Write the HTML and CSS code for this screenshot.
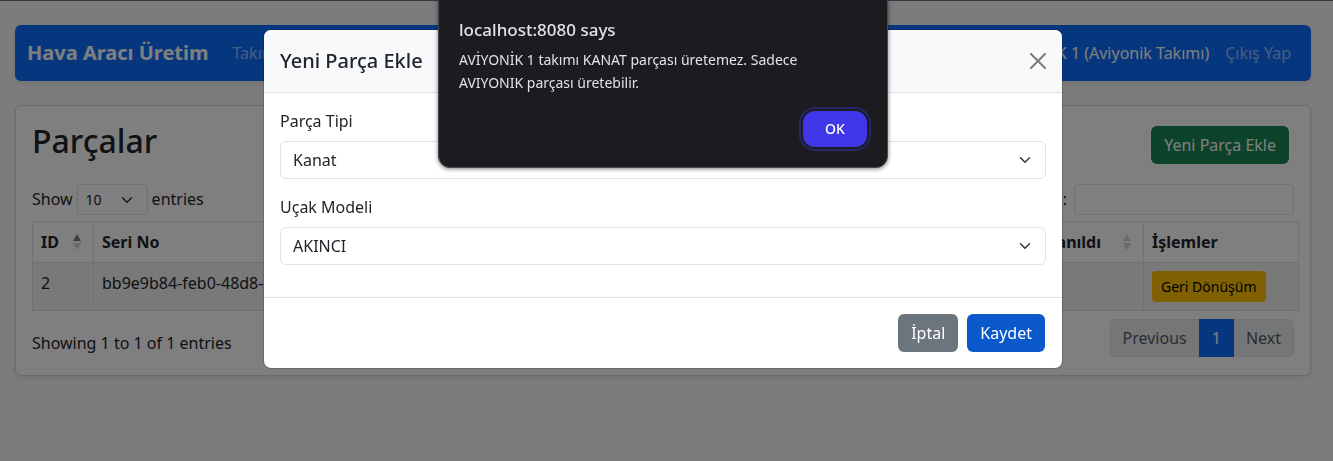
FILE: index.html
```
<!DOCTYPE html>
<html lang="tr">
<head>
<meta charset="utf-8">
<title>Hava Aracı Üretim</title>
<link rel="stylesheet" href="styles.css">
</head>
<body>
<div class="page">
  <nav class="navbar">
    <a class="brand" href="#">Hava Aracı Üretim</a>
    <a class="nav-link" href="#">Takım</a>
    <span class="nav-user">AVİYONİK 1 (Aviyonik Takımı)</span>
    <a class="nav-link" href="#">Çıkış Yap</a>
  </nav>
  <main class="card">
    <div class="card-head">
      <h2 class="card-title">Parçalar</h2>
      <button class="btn btn-success" type="button">Yeni Parça Ekle</button>
    </div>
    <div class="controls">
      <label class="control">Show
        <select class="select select-sm"><option>10</option></select>
        entries</label>
      <label class="control">Search:
        <input class="search" type="search"></label>
    </div>
    <table class="table">
      <thead>
        <tr>
          <th class="col-id"><span class="sort">ID
            <svg class="sort-icon" viewBox="0 0 8 16" aria-hidden="true"><path class="sort-on" d="M4 0 8 7H0z"/><path d="M4 16 0 9h8z"/></svg></span></th>
          <th>Seri No</th>
          <th class="col-used"><span class="sort">Kullanıldı
            <svg class="sort-icon" viewBox="0 0 8 16" aria-hidden="true"><path d="M4 0 8 7H0z"/><path d="M4 16 0 9h8z"/></svg></span></th>
          <th class="col-actions">İşlemler</th>
        </tr>
      </thead>
      <tbody>
        <tr>
          <td>2</td>
          <td>bb9e9b84-feb0-48d8-</td>
          <td></td>
          <td><button class="btn btn-warning" type="button">Geri Dönüşüm</button></td>
        </tr>
      </tbody>
    </table>
    <div class="table-foot">
      <div>Showing 1 to 1 of 1 entries</div>
      <div class="pagination">
        <button class="page-btn" type="button">Previous</button>
        <button class="page-btn page-active" type="button">1</button>
        <button class="page-btn" type="button">Next</button>
      </div>
    </div>
  </main>
</div>

<div class="backdrop">
  <div class="modal" role="dialog" aria-labelledby="modal-title">
    <div class="modal-header">
      <h5 class="modal-title" id="modal-title">Yeni Parça Ekle</h5>
      <button class="close" type="button" aria-label="Kapat">
        <svg class="close-icon" viewBox="0 0 16 16" aria-hidden="true"><path d="M1 1 15 15M15 1 1 15"/></svg>
      </button>
    </div>
    <form class="modal-body">
      <div class="field">
        <label for="part-type">Parça Tipi</label>
        <select class="select" id="part-type"><option>Kanat</option></select>
      </div>
      <div class="field">
        <label for="aircraft">Uçak Modeli</label>
        <select class="select" id="aircraft"><option>AKINCI</option></select>
      </div>
    </form>
    <div class="modal-footer">
      <button class="btn btn-secondary" type="button">İptal</button>
      <button class="btn btn-primary" type="button">Kaydet</button>
    </div>
  </div>
</div>

<div class="alert-layer">
  <div class="alert" role="alertdialog" aria-labelledby="alert-title">
    <h6 class="alert-title" id="alert-title">localhost:8080 says</h6>
    <p class="alert-text">AVİYONİK 1 takımı KANAT parçası üretemez. Sadece AVIYONIK parçası üretebilir.</p>
    <button class="alert-ok" type="button">OK</button>
  </div>
</div>
</body>
</html>
```
FILE: styles.css
```
* {
  box-sizing: border-box;
}

html {
  background: #f8f8f8;
}

body {
  margin: 0;
  border-top: 1px solid #38363f;
  color: #212529;
  font: 16px/24px "Noto Sans", sans-serif;
}

button,
select,
input {
  font: inherit;
  color: inherit;
}

a {
  text-decoration: none;
}

.page {
  padding: 24px 22px 24px 15px;
}

.navbar {
  display: flex;
  align-items: center;
  gap: 16px;
  height: 56px;
  margin-bottom: 24px;
  padding: 0 20px 0 12px;
  border-radius: 6px;
  background: #0d6efd;
  box-shadow: 0 2px 4px rgba(0, 0, 0, .08);
}

.brand {
  margin-right: 8px;
  color: #fff;
  font-size: 20px;
  font-weight: 700;
}

.nav-link {
  color: rgba(255, 255, 255, .55);
}

.nav-user {
  margin-left: auto;
  color: #fff;
}

.card {
  padding: 16px 11px 18px 16px;
  border: 1px solid #d4d4d5;
  border-radius: 6px;
  background: #fff;
  box-shadow: 0 2px 4px rgba(0, 0, 0, .08);
}

.card-head {
  display: flex;
  align-items: center;
  justify-content: space-between;
  margin-bottom: 16px;
  padding-right: 10px;
}

.card-title {
  margin: 0 0 8px;
  font-size: 32px;
  font-weight: 500;
  line-height: 38px;
}

.btn {
  padding: 6px 12px;
  border: 1px solid transparent;
  border-radius: 6px;
  color: #fff;
  line-height: 24px;
}

.btn-success {
  background: #198754;
}

.btn-secondary {
  background: #6c757d;
}

.btn-primary {
  background: #0a58ca;
}

.btn-warning {
  display: block;
  padding: 4px 8px;
  border-radius: 4px;
  background: #ffc107;
  color: #000;
  font-size: 14px;
  line-height: 21px;
}

.controls {
  display: flex;
  justify-content: space-between;
  margin-bottom: 6px;
  padding-right: 5px;
}

.control {
  display: flex;
  gap: 4px;
  line-height: 30px;
}

.select {
  width: 100%;
  height: 38px;
  padding: 0 36px 0 12px;
  border: 1px solid #dee2e6;
  border-radius: 6px;
  appearance: none;
  background: #fff url("data:image/svg+xml,%3Csvg xmlns='http://www.w3.org/2000/svg' viewBox='0 0 16 16'%3E%3Cpath fill='none' stroke='%23343a40' stroke-linecap='round' stroke-linejoin='round' stroke-width='2' d='m2 5 6 6 6-6'/%3E%3C/svg%3E") no-repeat right 12px center / 16px 12px;
}

.select-sm {
  width: 71px;
  height: 31px;
  padding-left: 8px;
  border-radius: 4px;
  font-size: 14px;
}

.search {
  width: 220px;
  height: 31px;
  margin-left: 3px;
  padding: 4px 8px;
  border: 1px solid #dee2e6;
  border-radius: 4px;
  background: #fff;
}

.table {
  width: 100%;
  border-collapse: collapse;
  text-align: left;
}

.table th,
.table td {
  padding: 8px;
  border: 1px solid #dee2e6;
  vertical-align: top;
}

.table td {
  background: #f2f2f2;
}

.col-id {
  width: 61px;
}

.col-used {
  width: 126px;
}

.col-actions {
  width: 155px;
}

.sort {
  display: flex;
  align-items: center;
  justify-content: space-between;
  padding-right: 4px;
}

.sort-icon {
  width: 8px;
  height: 16px;
  fill: #d3d3d4;
}

.sort-on {
  fill: #7a7c7f;
}

.table-foot {
  display: flex;
  align-items: center;
  justify-content: space-between;
  margin-top: 8px;
  padding-right: 5px;
}

.table-foot > :first-child {
  padding-top: 10px;
}

.pagination {
  display: flex;
}

.page-btn {
  height: 38px;
  padding: 0 12px;
  border: 1px solid #dee2e6;
  border-width: 1px 0;
  background: #e9ecef;
  color: rgba(33, 37, 41, .75);
}

.page-btn:first-child {
  border-left-width: 1px;
  border-radius: 6px 0 0 6px;
}

.page-btn:last-child {
  border-right-width: 1px;
  border-radius: 0 6px 6px 0;
}

.page-active {
  padding: 0 13px;
  border-color: #0d6efd;
  background: #0d6efd;
  color: #fff;
}

.backdrop {
  position: fixed;
  inset: 1px 0 0;
  padding: 28px 7px 0 0;
  background: rgba(0, 0, 0, .5);
}

.modal {
  max-width: 800px;
  margin: 0 auto;
  border: 1px solid rgba(0, 0, 0, .175);
  border-radius: 8px;
  background: #fff;
  background-clip: padding-box;
}

.modal-header {
  display: flex;
  align-items: center;
  justify-content: space-between;
  padding: 16px;
  border-bottom: 1px solid #dee2e6;
  border-radius: 7px 7px 0 0;
  background: #f8f9fa;
}

.modal-title {
  margin: 0;
  font-size: 20px;
  font-weight: 500;
  line-height: 30px;
}

.close {
  padding: 0;
  border: 0;
  background: none;
  opacity: .5;
}

.close-icon {
  display: block;
  width: 16px;
  height: 16px;
  fill: none;
  stroke: #000;
  stroke-width: 2;
  stroke-linecap: round;
}

.modal-body {
  padding: 16px;
}

.field {
  display: grid;
  gap: 8px;
  margin-bottom: 16px;
}

.modal-footer {
  display: flex;
  justify-content: flex-end;
  gap: 9px;
  padding: 16px 17px;
  border-top: 1px solid #dee2e6;
}

.alert-layer {
  position: fixed;
  inset: -10px 7px auto 0;
}

.alert {
  display: flex;
  flex-direction: column;
  width: 450px;
  margin: 0 auto;
  padding: 28px 20px 20px;
  border: 1px solid #4a494f;
  border-radius: 12px;
  background: #1c1b1f;
  box-shadow: 0 1px 4px rgba(0, 0, 0, .5);
  color: #e3e2e6;
}

.alert-title {
  margin: 0 0 7px;
  font-size: 17px;
  font-weight: 500;
  line-height: 22px;
}

.alert-text {
  margin: 0 0 17px;
  padding-right: 48px;
  font-size: 14px;
  line-height: 23px;
}

.alert-ok {
  align-self: flex-end;
  width: 64px;
  height: 36px;
  padding: 0;
  border: 0;
  border-radius: 12px;
  outline: 2px solid #28256b;
  outline-offset: 2px;
  background: #4038e8;
  color: #fff;
  font-size: 14px;
  font-weight: 500;
}
```
